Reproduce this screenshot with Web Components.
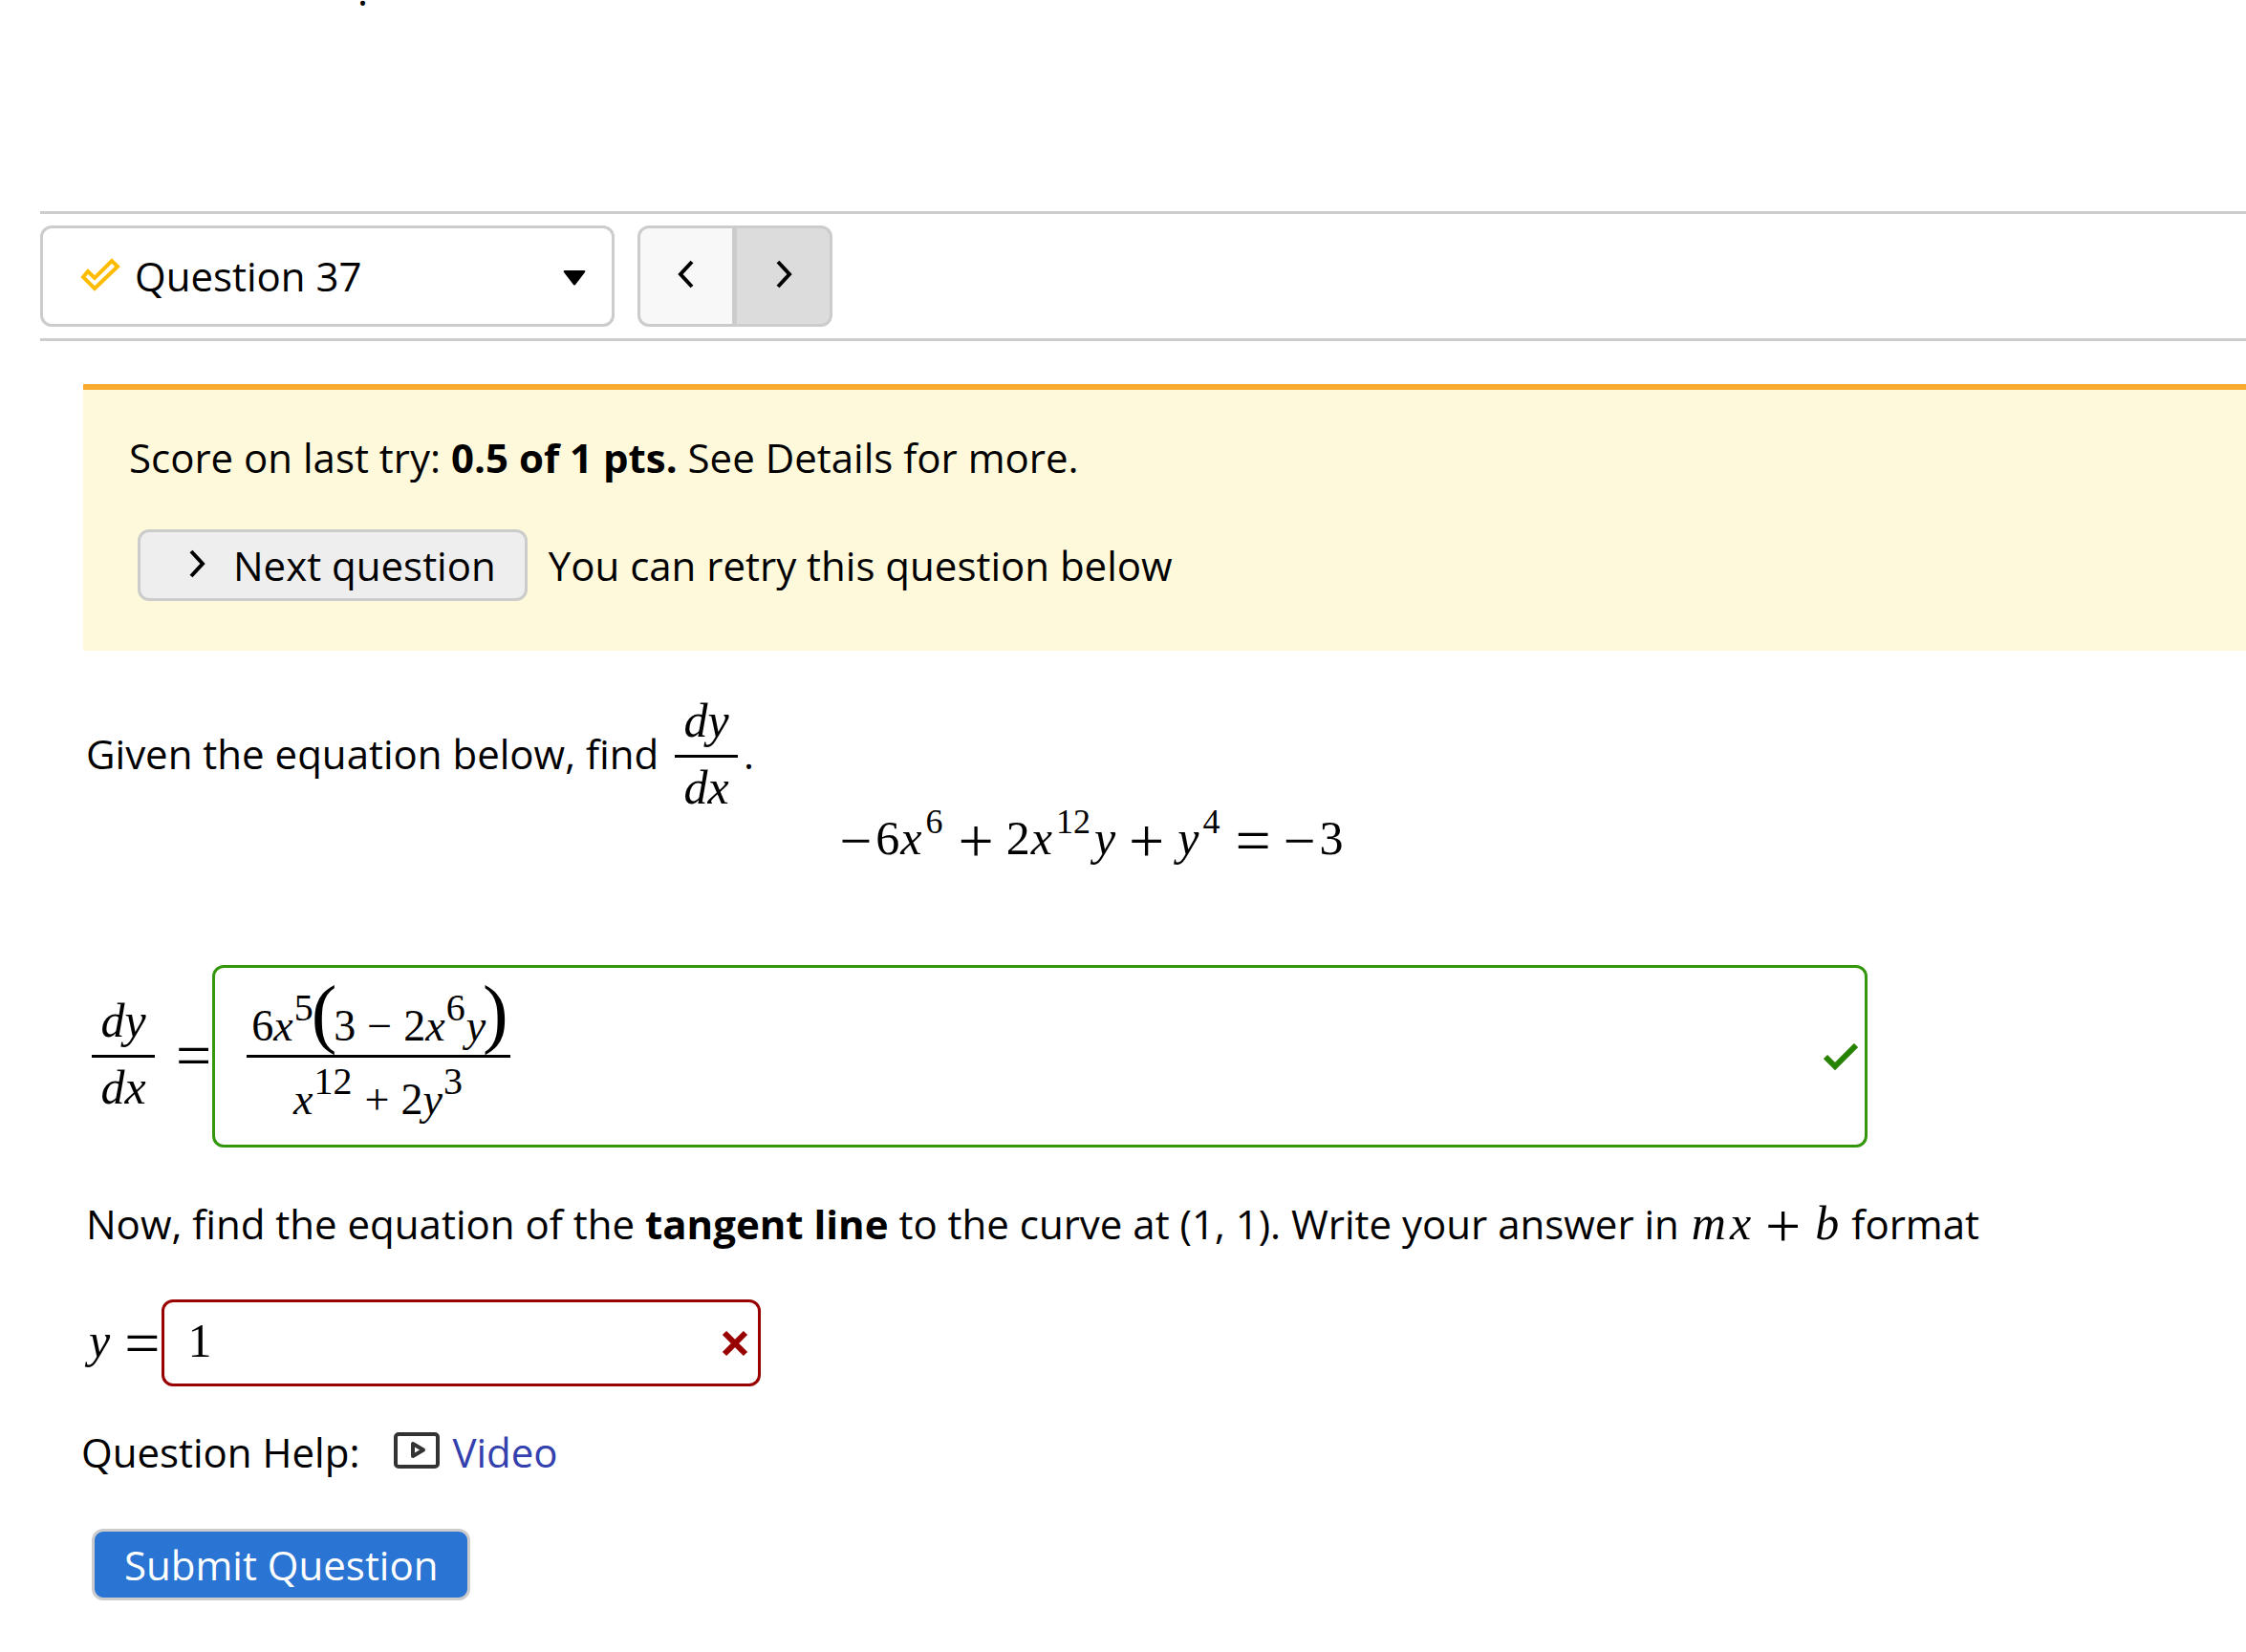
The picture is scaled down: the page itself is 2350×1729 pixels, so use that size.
<!DOCTYPE html>
<html lang="en">
<head>
<meta charset="utf-8">
<title>Question 37</title>
<style>
  body {
    margin: 0;
    background: #fff;
    color: #000;
    font: 42px/56px "Open Sans", sans-serif;
    overflow-x: hidden;
  }

  main {
    margin: 48px 156px 0 90px;
  }

  p {
    margin: 0;
  }

  .tangent {
    margin: 52px 0 51px;
  }
</style>
</head>
<body>
<page-intro>.</page-intro>
<question-nav></question-nav>
<score-panel>
  Score on last try: <b>0.5 of 1 pts.</b> See Details for more.
  <span slot="note">You can retry this question below</span>
</score-panel>
<main>
  <p>Given the equation below, find <math-frac><i slot="num">dy</i><i slot="den">dx</i></math-frac>.</p>
  <math-display></math-display>
  <answer-box></answer-box>
  <p class="tangent">Now, find the equation of the <b>tangent line</b> to the curve at (1, 1). Write your answer in <math-inline></math-inline> format</p>
  <line-answer></line-answer>
</main>
<question-help></question-help>
<submit-button>Submit Question</submit-button>

<script>
const MATH_STYLE = `
  .math {
    font-family: "Liberation Serif", serif;
    font-size: 50px;
    line-height: 42px;
    white-space: nowrap;
  }

  .math i {
    margin: 0 1px;
  }

  .math sup {
    font-size: 36px;
    line-height: 0;
    vertical-align: 22px;
    margin: 0 3px;
  }

  .op {
    font-size: 66px;
    line-height: 0;
    vertical-align: -8px;
    margin: 0 13px;
  }

  .neg {
    font-size: 60px;
    line-height: 0;
    vertical-align: -6px;
    margin-right: 4px;
  }
`;

class PageIntro extends HTMLElement {
  constructor() {
    super();
    this.attachShadow({ mode: "open" }).innerHTML = `
      <style>
        :host {
          display: flex;
          align-items: flex-end;
          height: 18px;
          padding-left: 374px;
        }
      </style>
      <slot></slot>
    `;
  }
}

class QuestionNav extends HTMLElement {
  constructor() {
    super();
    this.attachShadow({ mode: "open" }).innerHTML = `
      <style>
        :host {
          display: flex;
          gap: 24px;
          margin: 203px 0 0 42px;
          padding: 12px 0;
          border-top: 3px solid #ccc;
          border-bottom: 3px solid #ccc;
        }

        .picker {
          position: relative;
          width: 601px;
        }

        select {
          appearance: none;
          box-sizing: border-box;
          width: 100%;
          height: 106px;
          padding: 0 80px 0 96px;
          border: 3px solid #ccc;
          border-radius: 12px;
          background: #fff;
          color: #000;
          font: inherit;
        }

        .status {
          position: absolute;
          left: 42px;
          top: 32px;
        }

        .caret {
          position: absolute;
          right: 30px;
          top: 46px;
        }

        .pager {
          display: flex;
        }

        .pager button {
          box-sizing: border-box;
          width: 102px;
          height: 106px;
          padding: 0 0 5px;
          border: 3px solid #ccc;
          background: #f8f8f8;
        }

        .pager button:first-child {
          border-radius: 12px 0 0 12px;
        }

        .pager button:last-child {
          border-left-width: 2px;
          border-radius: 0 12px 12px 0;
          background: #dcdcdc;
        }

        .pager svg {
          display: block;
          margin: auto;
        }
      </style>
      <div class="picker">
        <select aria-label="Question"><option>Question 37</option></select>
        <svg class="status" width="42" height="38" viewBox="0 0 42 38" fill="none" stroke="#fb0" stroke-width="4"><path d="M3 22 8 16 15 23 33 5 39 11 15 34Z"/></svg>
        <svg class="caret" width="24" height="18" viewBox="0 0 24 18"><path d="M2 1H22Q24 1 23 3L13 16Q12 17 11 16L1 3Q0 1 2 1Z"/></svg>
      </div>
      <div class="pager">
        <button aria-label="Previous question"><svg width="20" height="30" viewBox="0 0 20 30" fill="none" stroke="#000" stroke-width="4"><path d="M16 2 4 15 16 28"/></svg></button>
        <button aria-label="Next question"><svg width="20" height="30" viewBox="0 0 20 30" fill="none" stroke="#000" stroke-width="4"><path d="M4 2 16 15 4 28"/></svg></button>
      </div>
    `;
  }
}

class ScorePanel extends HTMLElement {
  constructor() {
    super();
    this.attachShadow({ mode: "open" }).innerHTML = `
      <style>
        :host {
          display: block;
          margin: 45px 0 0 87px;
          padding: 43px 0 52px 48px;
          border-top: 6px solid #faa92f;
          background: #fff9db;
        }

        .retry {
          display: flex;
          align-items: center;
          gap: 22px;
          margin: 47px 0 0 9px;
        }

        button {
          display: flex;
          align-items: center;
          gap: 28px;
          box-sizing: border-box;
          height: 75px;
          padding: 0 30px 0 49px;
          border: 3px solid #ccc;
          border-radius: 12px;
          background: #eee;
          color: #000;
          font: inherit;
        }

        svg {
          margin-bottom: 3px;
        }
      </style>
      <div><slot></slot></div>
      <div class="retry">
        <button><svg width="20" height="30" viewBox="0 0 20 30" fill="none" stroke="#000" stroke-width="4"><path d="M4 2 16 15 4 28"/></svg>Next question</button>
        <slot name="note"></slot>
      </div>
    `;
  }
}

class MathFrac extends HTMLElement {
  constructor() {
    super();
    this.attachShadow({ mode: "open" }).innerHTML = `
      <style>
        :host {
          display: inline-flex;
          flex-direction: column;
          vertical-align: 34px;
          min-width: 66px;
          margin: 0 6px;
          font: 50px/48px "Liberation Serif", serif;
          text-align: center;
        }

        .num {
          padding: 1px 0 12px;
          border-bottom: 3px solid #000;
        }

        .den {
          padding: 7px 0 6px;
        }
      </style>
      <div class="num"><slot name="num"></slot></div>
      <div class="den"><slot name="den"></slot></div>
    `;
  }
}

class MathDisplay extends HTMLElement {
  constructor() {
    super();
    this.attachShadow({ mode: "open" }).innerHTML = `
      <style>
        :host {
          display: block;
          padding-top: 2px;
          text-align: center;
        }
        ${MATH_STYLE}
      </style>
      <div class="math"><span class="neg">−</span>6<i>x</i><sup>6</sup><span class="op">+</span>2<i>x</i><sup>12</sup><i>y</i><span class="op">+</span><i>y</i><sup>4</sup><span class="op">=</span><span class="neg">−</span>3</div>
    `;
  }
}

class MathInline extends HTMLElement {
  constructor() {
    super();
    this.attachShadow({ mode: "open" }).innerHTML = `
      <style>
        ${MATH_STYLE}
        .math i {
          margin: 0 2px;
        }
      </style>
      <span class="math"><i>m</i><i>x</i><span class="op">+</span><i>b</i></span>
    `;
  }
}

class AnswerBox extends HTMLElement {
  constructor() {
    super();
    this.attachShadow({ mode: "open" }).innerHTML = `
      <style>
        ${MATH_STYLE}
        :host {
          display: flex;
          align-items: center;
          margin-top: 112px;
          padding-right: 240px;
        }

        .math .op {
          margin: 0 1px 0 16px;
        }

        .box {
          flex: 1;
          display: flex;
          align-items: center;
          justify-content: space-between;
          padding: 22px 7px 22px 33px;
          border: 3px solid #34960c;
          border-radius: 12px;
        }

        .frac {
          font: 46px/50px "Liberation Serif", serif;
          text-align: center;
          white-space: nowrap;
        }

        .num {
          padding: 14px 5px 5px;
          border-bottom: 3px solid #000;
        }

        .den {
          padding-top: 19px;
        }

        .frac sup {
          font-size: 40px;
          line-height: 0;
          vertical-align: 21px;
          margin: 0 1px;
        }

        .frac .bin {
          line-height: 0;
          margin: 0 12px;
        }

        .paren {
          font-size: 80px;
          line-height: 0;
          vertical-align: 2px;
          margin: 0 -3px;
        }
      </style>
      <span class="math" id="lhs"><math-frac><i slot="num">dy</i><i slot="den">dx</i></math-frac><span class="op">=</span></span>
      <div class="box">
        <div class="frac" role="textbox" tabindex="0" aria-labelledby="lhs">
          <div class="num">6<i>x</i><sup>5</sup><span class="paren">(</span>3<span class="bin">−</span>2<i>x</i><sup>6</sup><i>y</i><span class="paren">)</span></div>
          <div class="den"><i>x</i><sup>12</sup><span class="bin">+</span>2<i>y</i><sup>3</sup></div>
        </div>
        <svg width="36" height="28" viewBox="0 0 36 28" fill="none" stroke="#268300" stroke-width="6"><path d="M2 14 12 24 34 2"/></svg>
      </div>
    `;
  }
}

class LineAnswer extends HTMLElement {
  constructor() {
    super();
    this.attachShadow({ mode: "open" }).innerHTML = `
      <style>
        ${MATH_STYLE}
        :host {
          display: flex;
          align-items: center;
        }

        label {
          padding: 0 0 6px 2px;
        }

        label .op {
          margin: 0 2px 0 14px;
        }

        .box {
          display: flex;
          align-items: center;
          box-sizing: border-box;
          width: 627px;
          height: 91px;
          padding: 0 10px 0 24px;
          border: 3px solid #900;
          border-radius: 12px;
        }

        input {
          flex: 1;
          min-width: 0;
          padding: 0 0 6px;
          border: 0;
          outline: 0;
          background: none;
          color: #000;
          font: 50px/56px "Liberation Serif", serif;
        }
      </style>
      <label class="math" for="line"><i>y</i><span class="op">=</span></label>
      <div class="box">
        <input id="line" type="text" value="1">
        <svg width="28" height="28" viewBox="0 0 28 28" fill="none" stroke="#900" stroke-width="6"><path d="M3 3 25 25M25 3 3 25"/></svg>
      </div>
    `;
  }
}

class QuestionHelp extends HTMLElement {
  constructor() {
    super();
    this.attachShadow({ mode: "open" }).innerHTML = `
      <style>
        :host {
          display: flex;
          align-items: center;
          margin: 41px 0 0 85px;
        }

        svg {
          margin: 0 13px 4px 36px;
        }

        a {
          color: #3340ad;
          text-decoration: none;
        }
      </style>
      <span>Question Help:</span>
      <svg width="48" height="38" viewBox="0 0 48 38" fill="none" stroke="#333" stroke-width="4"><rect x="2" y="2" width="44" height="34" rx="3"/><path stroke-linejoin="round" d="M20 12V25L31 18.500Z"/></svg>
      <a href="#video">Video</a>
    `;
  }
}

class SubmitButton extends HTMLElement {
  constructor() {
    super();
    this.attachShadow({ mode: "open" }).innerHTML = `
      <style>
        :host {
          display: block;
          margin: 52px 0 0 96px;
        }

        button {
          display: block;
          box-sizing: border-box;
          height: 75px;
          padding: 0 31px;
          border: 3px solid #ccc;
          border-radius: 12px;
          background: #2a75d3;
          color: #fff;
          font: inherit;
        }
      </style>
      <button><slot></slot></button>
    `;
  }
}

customElements.define("page-intro", PageIntro);
customElements.define("question-nav", QuestionNav);
customElements.define("score-panel", ScorePanel);
customElements.define("math-frac", MathFrac);
customElements.define("math-display", MathDisplay);
customElements.define("math-inline", MathInline);
customElements.define("answer-box", AnswerBox);
customElements.define("line-answer", LineAnswer);
customElements.define("question-help", QuestionHelp);
customElements.define("submit-button", SubmitButton);
</script>
</body>
</html>
